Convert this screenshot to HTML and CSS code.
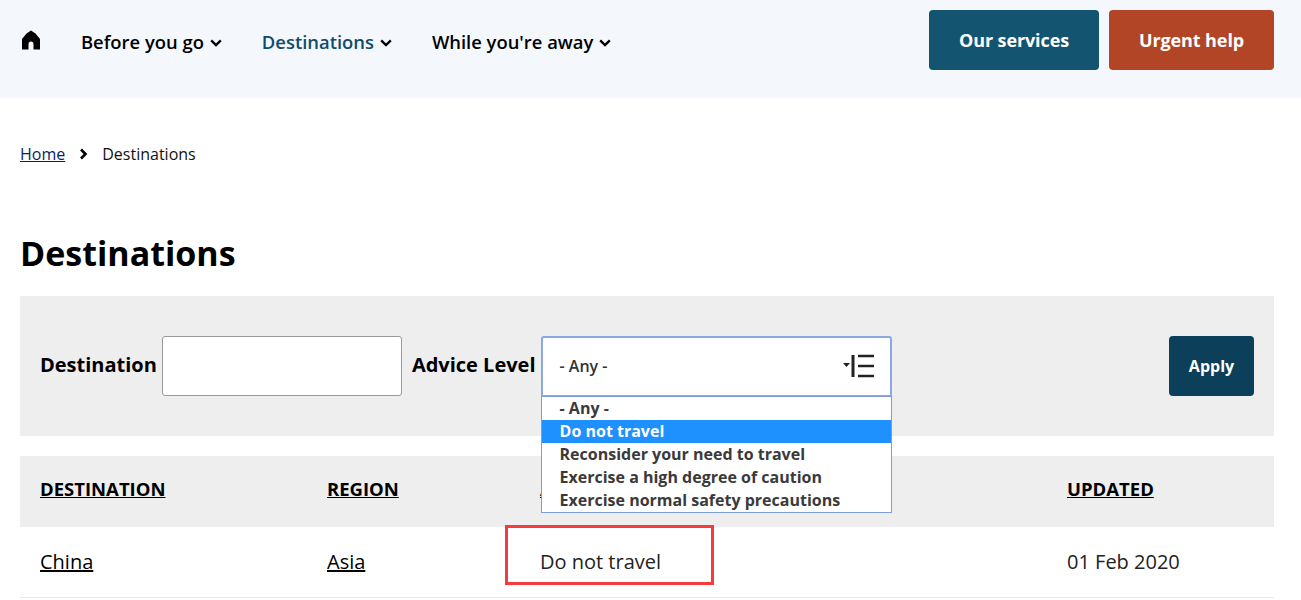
FILE: index.html
```html
<!DOCTYPE html>
<html lang="en">
<head>
  <meta charset="UTF-8">
  <title>Destinations</title>
  <link rel="stylesheet" href="styles.css">
</head>
<body>
  <header class="site-header">
    <nav class="main-nav">
      <a class="home-link" href="#" title="Home">
        <svg width="20" height="20" viewBox="0 0 20 20"><path d="M10 0.5 14.5 3.5 19 9V19.5H12.5V14A2.5 2.5 0 0 0 7.500 14V19.500H1V9L5.500 3.500Z" fill="#000"/></svg>
      </a>
      <a class="nav-item" href="#">Before you go <svg class="chevron" width="12" height="8" viewBox="0 0 12 8"><path d="M1.2 1.300 6 6 10.800 1.300" fill="none" stroke="currentColor" stroke-width="2.400"/></svg></a>
      <a class="nav-item active" href="#">Destinations <svg class="chevron" width="12" height="8" viewBox="0 0 12 8"><path d="M1.2 1.300 6 6 10.800 1.300" fill="none" stroke="#000" stroke-width="2.400"/></svg></a>
      <a class="nav-item" href="#">While you're away <svg class="chevron" width="12" height="8" viewBox="0 0 12 8"><path d="M1.2 1.300 6 6 10.800 1.300" fill="none" stroke="currentColor" stroke-width="2.400"/></svg></a>
    </nav>
    <div class="header-buttons">
      <a class="btn btn-services" href="#">Our services</a>
      <a class="btn btn-urgent" href="#">Urgent help</a>
    </div>
  </header>

  <main class="content">
    <div class="breadcrumb">
      <a href="#">Home</a>
      <svg width="9" height="12" viewBox="0 0 9 12"><path d="M2 1.500 6.500 6 2 10.500" fill="none" stroke="#000" stroke-width="2.600"/></svg>
      <span>Destinations</span>
    </div>

    <h1>Destinations</h1>

    <form class="filters">
      <label class="filter-label" for="dest">Destination</label>
      <input class="filter-input" id="dest" type="text">
      <span class="filter-label">Advice Level</span>
      <div class="select-wrap">
        <div class="select-box">
          <span>- Any -</span>
          <svg width="32" height="24" viewBox="0 0 32 24">
            <path d="M0 9H7L3.500 13Z" fill="#222"/>
            <path d="M10 1V23" stroke="#222" stroke-width="3"/>
            <path d="M15 2H31M15 12H31M15 22H31" stroke="#222" stroke-width="2.500"/>
          </svg>
        </div>
        <ul class="select-list">
          <li>- Any -</li>
          <li class="selected">Do not travel</li>
          <li>Reconsider your need to travel</li>
          <li>Exercise a high degree of caution</li>
          <li>Exercise normal safety precautions</li>
        </ul>
      </div>
      <button class="apply-btn" type="button">Apply</button>
    </form>

    <div class="table-wrap">
      <div class="table-row table-head">
        <a href="#">DESTINATION</a>
        <a href="#">REGION</a>
        <a href="#">ADVICE LEVEL</a>
        <a href="#">UPDATED</a>
      </div>
      <div class="table-row table-body">
        <a href="#">China</a>
        <a href="#">Asia</a>
        <span>Do not travel</span>
        <span>01 Feb 2020</span>
      </div>
      <div class="highlight-box"></div>
    </div>
  </main>
</body>
</html>
```

FILE: styles.css
```css
* {
  box-sizing: border-box;
}

html, body {
  height: 600px;
  overflow: hidden;
}

body {
  margin: 0;
  font-family: 'Open Sans', 'Noto Sans', sans-serif;
  color: #000;
  background: white;
}

.site-header {
  display: flex;
  justify-content: space-between;
  height: 98px;
  padding: 10px 27px 0 20px;
  background: #f4f7fc;
}

.main-nav {
  display: flex;
  align-items: flex-start;
}

.home-link {
  display: block;
  height: 20px;
  margin-top: 20px;
  margin-left: 1px;
  margin-right: 40px;
}

.nav-item {
  display: flex;
  align-items: center;
  gap: 6px;
  height: 24px;
  margin-top: 19px;
  margin-right: 40px;
  font-size: 18.4px;
  font-weight: 600;
  color: #000;
  text-decoration: none;
  white-space: nowrap;
}

.nav-item .chevron {
  margin-top: 3px;
}

.nav-item.active {
  color: #0f4c69;
}

.header-buttons {
  display: flex;
  gap: 10px;
}

.btn {
  display: flex;
  align-items: center;
  justify-content: center;
  height: 60px;
  border-radius: 4px;
  color: white;
  font-size: 18px;
  font-weight: 700;
  letter-spacing: -0.1px;
  text-decoration: none;
}

.btn-services {
  width: 170px;
  background: #135470;
}

.btn-urgent {
  width: 165px;
  background: #b24525;
}

.content {
  padding: 0 27px 0 20px;
}

.breadcrumb {
  display: flex;
  align-items: center;
  gap: 14px;
  margin-top: 45px;
  height: 22px;
  font-size: 16px;
  color: #111;
}

.breadcrumb a {
  color: #0b1b6e;
}

h1 {
  margin: 66px 0 0;
  height: 65px;
  font-size: 34px;
  line-height: 44px;
  font-weight: 700;
}

.filters {
  display: flex;
  align-items: flex-start;
  height: 140px;
  padding: 40px 20px;
  background: #eeeeee;
}

.filter-label {
  margin-right: 5px;
  font-size: 20px;
  font-weight: 700;
  line-height: 58px;
}

.filter-input {
  width: 240px;
  height: 60px;
  margin-right: 10px;
  border: 1px solid #999;
  border-radius: 3px;
  background: white;
}

.select-wrap {
  position: relative;
  width: 351px;
  height: 61px;
}

.select-box {
  display: flex;
  align-items: center;
  justify-content: space-between;
  height: 61px;
  padding: 0 15px 1px 17px;
  background: white;
  border: 2px solid #8aa8e2;
  border-radius: 3px 3px 0 0;
  font-size: 16px;
  font-weight: 600;
  color: #333;
}

.select-list {
  position: absolute;
  top: 60px;
  left: 0;
  z-index: 2;
  width: 351px;
  margin: 0;
  padding: 0;
  list-style: none;
  background: white;
  border: 1px solid #7c9cdc;
  font-size: 16px;
  font-weight: 700;
  line-height: 23px;
  color: #3a3a3a;
}

.select-list li {
  padding-left: 18px;
  white-space: nowrap;
}

.select-list .selected {
  background: #1e90ff;
  color: white;
}

.apply-btn {
  width: 85px;
  height: 60px;
  margin-left: auto;
  border: none;
  border-radius: 4px;
  background: #0b3f5a;
  color: white;
  font-family: inherit;
  font-size: 16px;
  font-weight: 700;
}

.table-wrap {
  position: relative;
  margin-top: 20px;
}

.table-row {
  display: grid;
  grid-template-columns: 287px 213px 527px 1fr;
  align-items: center;
  padding-left: 20px;
}

.table-row a {
  color: #000;
}

.table-head {
  height: 71px;
  padding-bottom: 7px;
  background: #eeeeee;
  font-size: 18.5px;
  font-weight: 700;
}

.table-body {
  height: 71px;
  padding-bottom: 2px;
  border-bottom: 1px solid #e8e8e8;
  font-size: 20px;
  color: #222;
}

.highlight-box {
  position: absolute;
  top: 69px;
  left: 485px;
  width: 209px;
  height: 60px;
  border: 3px solid #f53b3b;
}
```
